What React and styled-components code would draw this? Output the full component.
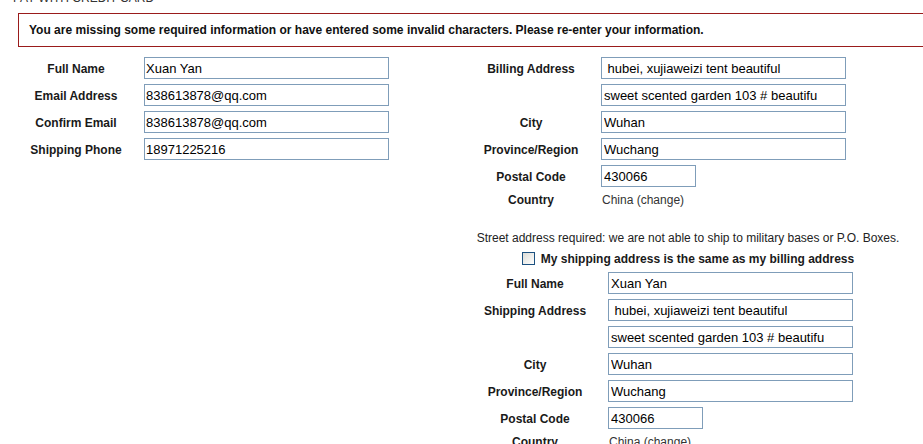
import styled, { createGlobalStyle } from "styled-components";

const GlobalStyle = createGlobalStyle`
  body {
    margin: 0;
    background: #fff;
    font-family: "Liberation Sans", Arial, sans-serif;
    color: #111;
    overflow: hidden;
  }
`;

const Page = styled.div`
  width: 923px;
  height: 444px;
  overflow: hidden;
`;

const Heading = styled.div`
  margin: -9px 0 0 13px;
  font-size: 12px;
  line-height: 14px;
  color: #333;
  text-transform: uppercase;
`;

const ErrorBox = styled.div`
  margin: 8px 0 0 18px;
  width: 940px;
  height: 32px;
  border: 1px solid #9a1b1b;
  padding-left: 10px;
  display: flex;
  align-items: center;
  font-size: 12px;
  font-weight: bold;
  color: #111;
  white-space: nowrap;
`;

const Columns = styled.div`
  display: flex;
  align-items: flex-start;
  margin-top: 10px;
  gap: 82px;
  padding-left: 20px;
`;

const FormGrid = styled.div`
  display: grid;
  grid-template-columns: ${(p) => p.$label}px 245px;
  column-gap: ${(p) => p.$gap}px;
  row-gap: 5px;
  align-items: center;
  margin-top: ${(p) => p.$top || 0}px;
`;

const Label = styled.div`
  padding-top: 1px;
  line-height: 14px;
  text-align: center;
  font-size: 12px;
  font-weight: bold;
  color: #1a1a1a;
  white-space: nowrap;
`;

const Field = styled.input`
  box-sizing: border-box;
  width: ${(p) => (p.$short ? 95 : 245)}px;
  height: 22px;
  border: 1px solid #7f9db9;
  padding: 0 ${(p) => (p.$pad ? 2 : 1)}px;
  font-family: "Liberation Sans", Arial, sans-serif;
  font-size: 13px;
  color: #000;
  background: #fff;
  outline: none;
`;

const Static = styled.div`
  font-size: 12px;
  line-height: 14px;
  color: #333;
  padding-left: 1px;
`;

const RightCol = styled.div`
  width: 434px;
`;

const Note = styled.div`
  margin-top: 24px;
  font-size: 12px;
  line-height: 15px;
  color: #222;
  text-align: center;
  white-space: nowrap;
`;

const CheckRow = styled.label`
  margin-top: 5px;
  display: flex;
  justify-content: center;
  align-items: center;
  gap: 6px;
  height: 15px;
  font-size: 12px;
  font-weight: bold;
  color: #1a1a1a;
  white-space: nowrap;
`;

const Box = styled.span`
  box-sizing: border-box;
  width: 13px;
  height: 13px;
  border: 1px solid #1c5180;
  background: linear-gradient(135deg, #dcdcd7 0%, #f4f4f2 70%, #fff 100%);
`;

const Row = ({ label, children }) => (
  <>
    <Label>{label}</Label>
    {children}
  </>
);

export default function App() {
  return (
    <Page>
      <GlobalStyle />
      <Heading>Pay with credit card</Heading>
      <ErrorBox>
        You are missing some required information or have entered some invalid characters. Please re-enter your information.
      </ErrorBox>
      <Columns>
        <FormGrid $label={112} $gap={12}>
          <Row label="Full Name">
            <Field defaultValue="Xuan Yan" />
          </Row>
          <Row label="Email Address">
            <Field defaultValue="838613878@qq.com" />
          </Row>
          <Row label="Confirm Email">
            <Field defaultValue="838613878@qq.com" />
          </Row>
          <Row label="Shipping Phone">
            <Field defaultValue="18971225216" />
          </Row>
        </FormGrid>

        <RightCol>
          <FormGrid $label={120} $gap={10}>
            <Row label="Billing Address">
              <Field $pad defaultValue=" hubei, xujiaweizi tent beautiful" />
            </Row>
            <Row label="">
              <Field $pad defaultValue="sweet scented garden 103 # beautifu" />
            </Row>
            <Row label="City">
              <Field $pad defaultValue="Wuhan" />
            </Row>
            <Row label="Province/Region">
              <Field $pad defaultValue="Wuchang" />
            </Row>
            <Row label="Postal Code">
              <Field $pad $short defaultValue="430066" />
            </Row>
            <Row label="Country">
              <Static>China (change)</Static>
            </Row>
          </FormGrid>

          <Note>Street address required: we are not able to ship to military bases or P.O. Boxes.</Note>
          <CheckRow>
            <Box />
            My shipping address is the same as my billing address
          </CheckRow>

          <FormGrid $label={128} $gap={9} $top={6}>
            <Row label="Full Name">
              <Field $pad defaultValue="Xuan Yan" />
            </Row>
            <Row label="Shipping Address">
              <Field $pad defaultValue=" hubei, xujiaweizi tent beautiful" />
            </Row>
            <Row label="">
              <Field $pad defaultValue="sweet scented garden 103 # beautifu" />
            </Row>
            <Row label="City">
              <Field $pad defaultValue="Wuhan" />
            </Row>
            <Row label="Province/Region">
              <Field $pad defaultValue="Wuchang" />
            </Row>
            <Row label="Postal Code">
              <Field $pad $short defaultValue="430066" />
            </Row>
            <Row label="Country">
              <Static>China (change)</Static>
            </Row>
          </FormGrid>
        </RightCol>
      </Columns>
    </Page>
  );
}
